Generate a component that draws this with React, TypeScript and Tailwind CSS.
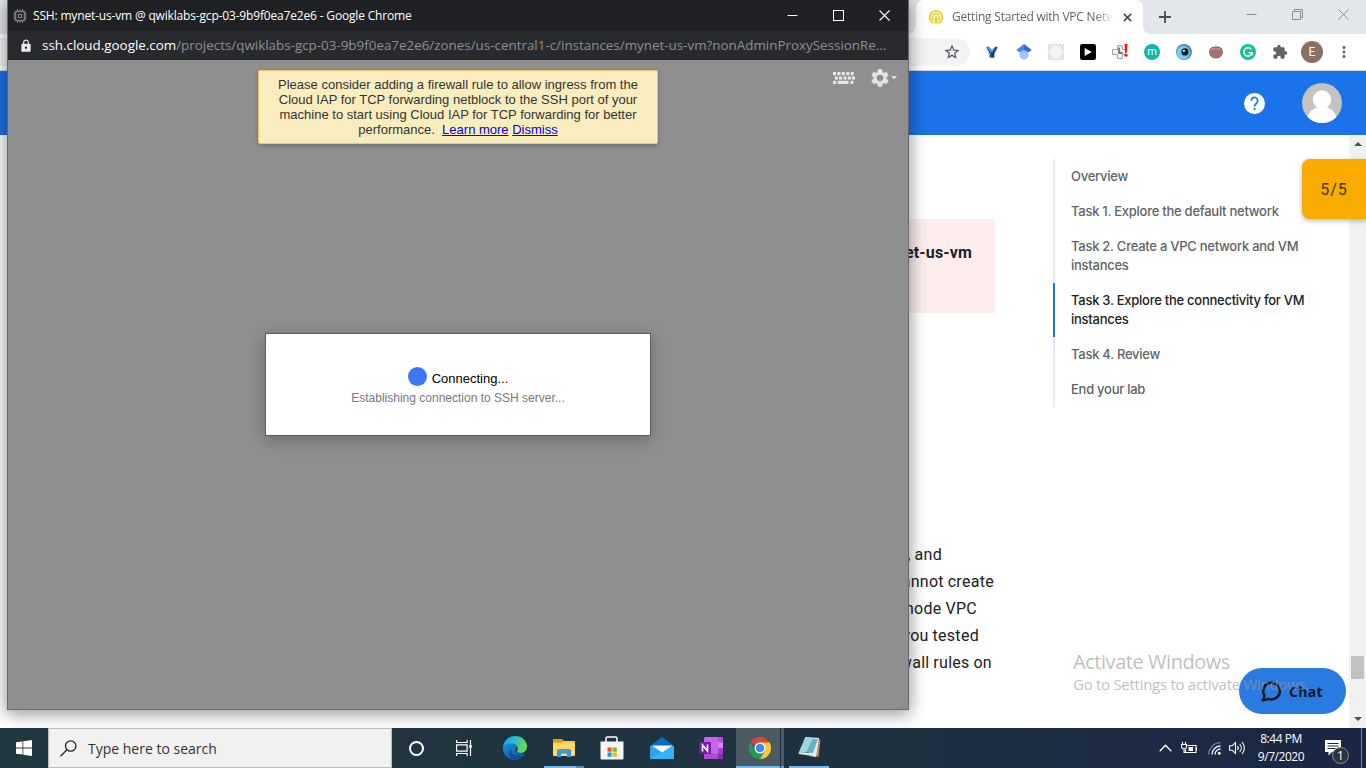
import React from "react";
import {
  MdExtension,
  MdLock,
  MdMoreVert,
  MdSettings,
  MdStarBorder,
} from "react-icons/md";

const ui = "font-['Open_Sans','Noto_Sans',sans-serif]";
const arial = "font-['Liberation_Sans',Arial,sans-serif]";
const roboto = "font-[Roboto,sans-serif]";

function ChipIcon() {
  return (
    <svg width="14" height="14" viewBox="0 0 14 14" fill="none" stroke="#7d7f82">
      <rect x="2.5" y="2.5" width="9" height="9" strokeWidth="1.6" />
      <rect x="5.5" y="5.5" width="3" height="3" strokeWidth="1.2" />
      <path d="M4.5 0v2M7 0v2M9.5 0v2M4.5 12v2M7 12v2M9.5 12v2M0 4.5h2M0 7h2M0 9.5h2M12 4.5h2M12 7h2M12 9.5h2" />
    </svg>
  );
}

function KeyboardIcon() {
  return (
    <svg width="22" height="12" viewBox="0 0 22 12" fill="#e6e6e6">
      {[0, 4.4, 8.8, 13.2, 17.6].map((x) => (
        <rect key={x} x={x} y="0" width="3.1" height="3.2" />
      ))}
      {[1.8, 6, 10.4, 14.8, 18.9].map((x) => (
        <rect key={x} x={x} y="4.4" width="3.1" height="3.2" />
      ))}
      <rect x="0" y="8.8" width="3.1" height="3.2" />
      <rect x="4.6" y="8.8" width="11" height="3.2" />
      <rect x="17.4" y="8.8" width="3.1" height="3.2" />
    </svg>
  );
}

function SshWindow() {
  return (
    <section className="absolute left-[7px] top-0 flex h-[710px] w-[902px] flex-col border-x border-b border-[#66686b] shadow-[0_3px_16px_1px_rgba(0,0,0,0.42)]">
      <header className="flex h-[31px] shrink-0 items-center bg-[#202124] pl-[5px] text-white">
        <ChipIcon />
        <span className={`${ui} ml-[6px] whitespace-nowrap text-[12px] tracking-[-0.17px]`}>
          SSH: mynet-us-vm @ qwiklabs-gcp-03-9b9f0ea7e2e6 - Google Chrome
        </span>
        <div className="ml-auto flex pr-[0.5px]">
          <div className="flex w-[46px] justify-center">
            <svg width="11" height="11" viewBox="0 0 11 11" stroke="#fff">
              <path d="M0.5 5.5h10" />
            </svg>
          </div>
          <div className="flex w-[46px] justify-center">
            <svg width="11" height="11" viewBox="0 0 11 11" stroke="#fff" fill="none">
              <rect x="0.5" y="0.5" width="10" height="10" />
            </svg>
          </div>
          <div className="flex w-[46px] justify-center">
            <svg width="11" height="11" viewBox="0 0 11 11" stroke="#fff" strokeWidth="1.1">
              <path d="M0.5 0.5l10 10M10.5 0.5l-10 10" />
            </svg>
          </div>
        </div>
      </header>
      <div className={`${ui} flex h-[29px] shrink-0 items-center bg-[#292a2d] pl-[11px] text-[13.4px]`}>
        <MdLock className="h-[14px] w-[14px] text-[#e8eaed]" />
        <span className="ml-[9px] whitespace-nowrap text-white">ssh.cloud.google.com</span>
        <span className="whitespace-nowrap text-[#8d8f93]">
          /projects/qwiklabs-gcp-03-9b9f0ea7e2e6/zones/us-central1-c/instances/mynet-us-vm?nonAdminProxySessionRe...
        </span>
      </div>
      <div className="relative flex flex-1 flex-col items-center bg-[#8f8f8f] pt-[10px]">
        <div className="absolute right-[11px] top-[7px] flex items-center">
          <KeyboardIcon />
          <MdSettings className="ml-[14px] h-[22px] w-[22px] text-[#e2e2e2]" />
          <svg width="6" height="4" viewBox="0 0 6 4" fill="#e2e2e2">
            <path d="M0 0h6L3 3.5z" />
          </svg>
        </div>
        <div className={`${arial} h-[74px] w-[400px] rounded-[2px] border border-[#f0c36d] bg-[#f9edbe] pt-[6px] text-center text-[13px] leading-[15px] text-[#333] shadow-[0_2px_4px_rgba(0,0,0,0.2)]`}>
          <p>Please consider adding a firewall rule to allow ingress from the</p>
          <p>Cloud IAP for TCP forwarding netblock to the SSH port of your</p>
          <p>machine to start using Cloud IAP for TCP forwarding for better</p>
          <p>
            performance.&nbsp; <a className="text-[#0000ee] underline">Learn more</a>{" "}
            <a className="text-[#0000ee] underline">Dismiss</a>
          </p>
        </div>
        <div className={`${arial} mt-[189px] flex h-[103px] w-[386px] flex-col items-center border border-[#5c5c5c] bg-white pt-[33px] shadow-[0_4px_16px_rgba(0,0,0,0.25)]`}>
          <div className="flex h-[20px] items-start">
            <div className="h-[19px] w-[19px] rounded-full bg-[#3b78f5]" />
            <span className="ml-[5px] mt-[4px] text-[13px] leading-[16px] text-black">Connecting...</span>
          </div>
          <span className="mt-[4px] text-[12px] leading-[14px] text-[#777]">
            Establishing connection to SSH server...
          </span>
        </div>
      </div>
    </section>
  );
}

function TabStrip() {
  return (
    <div className="flex h-[34px] shrink-0 bg-[#e3e6ea] pl-[908px]">
      <svg className="mt-[26px]" width="8" height="8" viewBox="0 0 8 8" fill="#fff">
        <path d="M8 0v8H0a8 8 0 0 0 8-8z" />
      </svg>
      <div className="flex w-[227px] items-center rounded-t-[8px] bg-white pl-[13px]">
        <svg width="14" height="14" viewBox="0 0 14 14" fill="none" stroke="#f4cc12" strokeLinecap="round">
          <path d="M4.2 12.7A6.2 6.2 0 1 1 9.8 12.7" strokeWidth="1.7" />
          <path d="M4.7 9.9A3.6 3.6 0 1 1 9.3 9.9" strokeWidth="1.5" />
          <path d="M7 7.5v5" strokeWidth="2.4" />
        </svg>
        <div className="ml-[9px] flex w-[162px] overflow-hidden mask-r-from-88%">
          <span className={`${ui} whitespace-nowrap text-[12px] tracking-[-0.22px] text-[#5f6368]`}>
            Getting Started with VPC Netw
          </span>
        </div>
        <svg className="ml-[9px]" width="9" height="9" viewBox="0 0 9 9" stroke="#4b4e52" strokeWidth="1.7">
          <path d="M0.8 0.8l7.4 7.4M8.2 0.8L0.8 8.2" />
        </svg>
      </div>
      <svg className="mt-[26px]" width="8" height="8" viewBox="0 0 8 8" fill="#fff">
        <path d="M0 0v8h8a8 8 0 0 1-8-8z" />
      </svg>
      <svg className="ml-[8px] mt-[11px]" width="12" height="12" viewBox="0 0 12 12" stroke="#4b4e52" strokeWidth="1.8">
        <path d="M6 0v12M0 6h12" />
      </svg>
      <div className="ml-auto flex pr-[17px] pt-[9px]">
        <svg width="11" height="11" viewBox="0 0 11 11" stroke="#8b8e92">
          <path d="M0.5 5.5h10" />
        </svg>
        <svg className="ml-[35px]" width="11" height="11" viewBox="0 0 11 11" stroke="#8b8e92" fill="none">
          <path d="M0.5 2.5h8v8h-8zM2.5 2.5v-2h8v8h-2" />
        </svg>
        <svg className="ml-[35px]" width="11" height="11" viewBox="0 0 11 11" stroke="#8b8e92">
          <path d="M0.5 0.5l10 10M10.5 0.5l-10 10" />
        </svg>
      </div>
    </div>
  );
}

function Slot({ children }: { children: React.ReactNode }) {
  return <div className="flex w-[32px] items-center justify-center">{children}</div>;
}

function Toolbar() {
  return (
    <div className="flex h-[37px] shrink-0 border-b border-[#d5d8dc] bg-white pr-[6px]">
      <div className="my-[4px] flex w-[970px] items-center justify-end rounded-r-full bg-[#f1f3f4] pr-[9px]">
        <MdStarBorder className="h-[18px] w-[18px] text-[#4f5357]" />
      </div>
      <div className="ml-auto flex items-stretch">
        <Slot>
          <svg width="14" height="14" viewBox="0 0 14 14">
            <path d="M0.5 1.500L3.500 0.700 7 4.200 10.500 0.700l3 .8-2.500 6.500L9.500 13.300h-5L3 8z" fill="#d4d7da" />
            <path d="M1.500 2h2.200L7 5.300 10.300 2h2.200L9.200 8.400V12.500H4.800V8.400z" fill="#174a8c" />
            <path d="M2.300 2.300h1.300L7 5.800 10.400 2.300l-2 5H5.600z" fill="#3fa9f5" />
            <path d="M8 6.500L12 2.300 8.700 8.300 8.500 12H7z" fill="#0b2a52" />
          </svg>
        </Slot>
        <Slot>
          <svg width="16" height="16" viewBox="0 0 16 16">
            <path d="M8 0L0.3 6 8 11.6z" fill="#4285f4" />
            <path d="M8 0l7.7 6L8 11.6z" fill="#3367d6" />
            <circle cx="8" cy="10.8" r="4.6" fill="#a0c3ff" />
            <path d="M4 8.5a4.6 4.6 0 0 1 8 0L8 6.6z" fill="#76a7fa" />
          </svg>
        </Slot>
        <Slot>
          <svg width="16" height="16" viewBox="0 0 16 16" fill="none" stroke="#fff">
            <rect width="16" height="16" fill="#e3e3e3" stroke="none" />
            <ellipse cx="8" cy="8" rx="6.5" ry="2.6" />
            <ellipse cx="8" cy="8" rx="6.5" ry="2.6" transform="rotate(60 8 8)" />
            <ellipse cx="8" cy="8" rx="6.5" ry="2.6" transform="rotate(120 8 8)" />
            <circle cx="8" cy="8" r="0.9" fill="#fff" />
          </svg>
        </Slot>
        <Slot>
          <svg width="16" height="16" viewBox="0 0 16 16">
            <rect width="16" height="16" rx="2.2" fill="#000" />
            <path d="M4.6 4l7.2 4-7.2 4z" fill="#fff" />
          </svg>
        </Slot>
        <Slot>
          <svg width="16" height="16" viewBox="0 0 16 16">
            <path d="M5.500 1.500h5v4h3v5h-3v4h-5v-4h-5v-5h5z" fill="#efefef" stroke="#a2a2a2" strokeWidth="1" />
            <path d="M7 3.500V9h3.500" stroke="#444" strokeWidth="1.300" fill="none" />
            <path d="M12.500 0h3l-.5 8.500h-2z" fill="#f01414" />
            <circle cx="14" cy="11.300" r="1.500" fill="#f01414" />
          </svg>
        </Slot>
        <Slot>
          <div className={`${roboto} flex h-4 w-4 items-center justify-center rounded-full bg-[#10b5ad] pb-[1px] text-[11px] leading-none text-white`}>m</div>
        </Slot>
        <Slot>
          <svg width="16" height="16" viewBox="0 0 16 16">
            <circle cx="8" cy="8" r="8" fill="#4c8fb0" />
            <circle cx="7.400" cy="8.600" r="6.600" fill="#74cdf2" />
            <circle cx="9" cy="7.900" r="3.600" fill="#151e2b" />
            <circle cx="7.900" cy="6.800" r="1.100" fill="#fff" />
          </svg>
        </Slot>
        <Slot>
          <svg width="16" height="16" viewBox="0 0 16 16">
            <path d="M8 3.500C12 1.500 15 4.500 15 8s-2.500 6.500-7 6.500S1 11.500 1 8s3-6.500 7-4.500z" fill="#a3706f" />
            <path d="M3 6c2-2 7-2 9 0" stroke="#cfadac" strokeWidth="1.200" fill="none" />
            <path d="M5.500 3.500L8 4l2.500-1.200M8 4V1.500" stroke="#6f6a5c" strokeWidth="1" fill="none" />
          </svg>
        </Slot>
        <Slot>
          <svg width="16" height="16" viewBox="0 0 16 16" fill="none" stroke="#fff" strokeWidth="1.500">
            <circle cx="8" cy="8" r="8" fill="#15c39a" stroke="none" />
            <path d="M11.300 5.200A4.200 4.200 0 1 0 12.200 8.700H8.600M12.200 8.200v3" />
          </svg>
        </Slot>
        <Slot><MdExtension className="h-[16px] w-[16px] text-[#5f6368]" /></Slot>
        <Slot>
          <div className={`${roboto} flex h-[22px] w-[22px] items-center justify-center rounded-full bg-[#8d6e63] text-[12px] leading-none text-white`}>E</div>
        </Slot>
        <Slot><MdMoreVert className="h-[18px] w-[18px] text-[#5f6368]" /></Slot>
      </div>
    </div>
  );
}

function LabHeader() {
  return (
    <div className="flex h-[64px] shrink-0 items-center justify-end bg-[#1a73e8] pr-[24px]">
      <svg className="mr-[37px]" width="21" height="21" viewBox="0 0 21 21" fill="none">
        <circle cx="10.500" cy="10.500" r="10.500" fill="#fff" />
        <path d="M7.300 7.800a3.200 3.200 0 1 1 5.300 2.300c-1.300 1.100-2.100 1.700-2.100 3.400" stroke="#1a73e8" strokeWidth="1.700" />
        <rect x="9.600" y="15" width="1.900" height="1.900" fill="#1a73e8" />
      </svg>
      <svg width="40" height="40" viewBox="0 0 40 40">
        <clipPath id="face"><circle cx="20" cy="20" r="20" /></clipPath>
        <g clipPath="url(#face)">
          <rect width="40" height="40" fill="#c3c3c3" />
          <circle cx="20" cy="16.500" r="9.200" fill="#fff" />
          <ellipse cx="20" cy="36.500" rx="14.500" ry="13" fill="#fff" />
        </g>
      </svg>
    </div>
  );
}

const toc = [
  { lines: ["Overview"] },
  { lines: ["Task 1. Explore the default network"] },
  { lines: ["Task 2. Create a VPC network and VM", "instances"] },
  { lines: ["Task 3. Explore the connectivity for VM", "instances"], active: true },
  { lines: ["Task 4. Review"] },
  { lines: ["End your lab"] },
];

function LabContent() {
  return (
    <div className="relative flex min-h-0 flex-1 bg-white">
      <div className={`${roboto} flex w-[995px] flex-col items-end text-right text-[16px] text-[#202124]`}>
        <div className="mt-[84px] h-[94px] w-[900px] rounded-[2px] bg-[#fdeded] pr-[23px] pt-[20px] font-bold leading-[27px] tracking-[0.15px]">
          mynet-us-vm
        </div>
        <div className="mt-[228px] leading-[27px] tracking-[0.3px] [word-spacing:-0.5px]">
          <p className="pr-[53px]">, and</p>
          <p className="pr-[1px]">cannot create</p>
          <p className="pr-[18px]">mode VPC</p>
          <p className="pr-[16px]">you tested</p>
          <p className="pr-[3px]">firewall rules on</p>
        </div>
      </div>
      <nav className="ml-[58px] mt-[24px] flex h-[248px] flex-col font-[Inter,sans-serif] text-[13px] font-medium leading-[19px] tracking-[-0.26px] text-[#5f6368]">
        {toc.map((t) => (
          <div
            key={t.lines[0]}
            className={t.active ? "border-l-2 border-[#1a73e8] py-[8px] pl-[16px] text-[#202124]" : "border-l-2 border-[#e8eaed] py-[8px] pl-[16px]"}
          >
            {t.lines.map((l) => (
              <p key={l} className="whitespace-nowrap">{l}</p>
            ))}
          </div>
        ))}
      </nav>
      <div className="ml-auto flex w-[17px] flex-col items-center bg-[#f1f1f1]">
        <svg className="mt-[7px]" width="8" height="4" viewBox="0 0 8 4" fill="#505050"><path d="M0 4h8L4 0z" /></svg>
        <div className="mt-[510px] h-[23px] w-[13px] bg-[#c1c1c1]" />
        <svg className="mt-[38px]" width="8" height="4" viewBox="0 0 8 4" fill="#505050"><path d="M0 0h8L4 4z" /></svg>
      </div>
      <div className={`${roboto} absolute right-0 top-[24px] flex h-[60px] w-[64px] items-center justify-center rounded-l-[8px] bg-[#f9ab00] pt-[2px] text-[16px] text-[#3c3a33] shadow-[0_2px_5px_rgba(60,64,67,0.35)]`}>
        <span className="tracking-[1px]">5/5</span>
      </div>
      <div className="absolute bottom-[14px] right-[20px] flex h-[46px] w-[107px] items-center rounded-full bg-[#297be2] pl-[21px] text-[#10151f]">
        <svg width="22" height="22" viewBox="0 0 22 22" fill="none" stroke="#10151f" strokeWidth="2.400" strokeLinejoin="round">
          <path d="M4.500 15.500A8.300 8.300 0 1 1 8.500 18.800C6.500 19.800 4.500 20.200 2.500 20.200 4 19 4.600 17.500 4.500 15.500z" />
        </svg>
        <span className={`${ui} ml-[7px] text-[14px] font-bold tracking-[0.3px]`}>Chat</span>
      </div>
      <div className="pointer-events-none absolute left-[1073px] top-[513px] font-['Open_Sans','Noto_Sans',sans-serif] text-[#9a9a9a]/65">
        <p className="text-[20px] leading-[27px] tracking-[-0.45px]">Activate Windows</p>
        <p className="whitespace-nowrap text-[15px] leading-[18px] tracking-[-0.28px]">Go to Settings to activate Windows.</p>
      </div>
    </div>
  );
}

function Taskbar() {
  return (
    <footer className={`${ui} relative z-10 flex h-[40px] shrink-0 bg-linear-to-r from-[#20383f] via-[#1f3140] via-60% to-[#1a2644]`}>
      <div className="flex w-[48px] items-center justify-center">
        <svg width="16" height="16" viewBox="0 0 16 16" fill="#fff">
          <path d="M0 2.300L6.500 1.400v6.200H0zM7.300 1.300L16 0v7.600H7.300zM0 8.400h6.500v6.200L0 13.700zM7.300 8.400H16V16l-8.700-1.200z" />
        </svg>
      </div>
      <div className="flex w-[344px] items-center border border-[#bcbcbc] bg-[#f1f1f1] pl-[11px]">
        <svg width="17" height="17" viewBox="0 0 17 17" fill="none" stroke="#222" strokeWidth="1.300">
          <circle cx="10.700" cy="6" r="5.200" />
          <path d="M7 9.800L0.500 16.300" />
        </svg>
        <span className="ml-[11px] text-[14px] text-[#333]">Type here to search</span>
      </div>
      <div className="flex w-[48px] items-center justify-center">
        <div className="h-[15px] w-[15px] rounded-full border-[2px] border-white" />
      </div>
      <div className="flex w-[48px] items-center justify-center">
        <svg width="16" height="16" viewBox="0 0 16 16" fill="none" stroke="#fff" strokeWidth="1.200">
          <path d="M0.600 0v2.500h10.500V0M0.600 16v-2.500h10.500V16M0.600 4.800h10.500v6.400H0.600z M14.500 0v16" />
          <rect x="13.200" y="5" width="2.600" height="2.600" fill="#fff" stroke="none" />
        </svg>
      </div>
      <div className="flex w-[54px] items-center justify-center">
        <svg width="24" height="24" viewBox="0 0 24 24">
          <defs>
            <linearGradient id="e1" x1="0" y1="0" x2="1" y2="0.300"><stop offset="0" stopColor="#1f9be0" /><stop offset="0.550" stopColor="#30c0cc" /><stop offset="1" stopColor="#62dc4f" /></linearGradient>
            <linearGradient id="e2" x1="0" y1="0" x2="0.600" y2="1"><stop offset="0" stopColor="#1b93dd" /><stop offset="1" stopColor="#0c59a4" /></linearGradient>
          </defs>
          <path d="M0 12C0 7 4 5.500 8 6.500c4 1 6 4 5 6.500-1.500 4 4 6 9 4C20 21.500 16.500 24 12 24 5 24 0 19 0 12z" fill="url(#e2)" />
          <path d="M8.500 12.500C7 18 12 22 22 17.500 20 21.500 16 24 12 24 6 22.500 4.500 16 8.500 12.500z" fill="#0f4f9e" />
          <path d="M0 11C1 4 6 0 12 0c7 0 12 5 12 10.500 0 4-3 6.500-6.500 6.500-3 0-4-1.200-3.300-2.300C16 12 13.500 7.500 8 7.500c-4 0-7 1.500-8 3.500z" fill="url(#e1)" />
        </svg>
      </div>
      <div className="ml-[2px] flex w-[32px] flex-col items-center border-b-2 border-[#76b9ed] pl-[8px] pt-[11px]">
        <svg width="22" height="18" viewBox="0 0 22 18">
          <path d="M0 0h9l1.500 2H22v14H0z" fill="#f9c949" />
          <path d="M0 0h9l1.500 2L9 3.500H0z" fill="#e39b17" />
          <path d="M0 4h22v13H0z" fill="#ffd767" />
          <path d="M4 18v-6.500a1.500 1.500 0 0 1 1.500-1.500h11a1.500 1.500 0 0 1 1.500 1.500V18h-4.200v-3.500H8.200V18z" fill="#3f97dc" />
        </svg>
      </div>
      <div className="w-[8px] border-b-2 border-[#5689b0]" />
      <div className="ml-[4px] flex w-[48px] items-center justify-center">
        <svg width="24" height="24" viewBox="0 0 24 24">
          <path d="M6 7V2.500A1.500 1.500 0 0 1 7.500 1h8A1.500 1.500 0 0 1 17 2.500V7" fill="none" stroke="#fff" strokeWidth="1.500" />
          <path d="M0.500 5.500h23V22.500a1 1 0 0 1-1 1h-21a1 1 0 0 1-1-1z" fill="#f4f4f4" />
          <path d="M7.500 11.500h4.200v4.200H7.500z" fill="#f04e1f" /><path d="M12.600 11.500h4.200v4.200h-4.200z" fill="#7db900" />
          <path d="M7.500 16.500h4.200v4.200H7.500z" fill="#03a3ec" /><path d="M12.600 16.500h4.200v4.200h-4.200z" fill="#fdb600" />
        </svg>
      </div>
      <div className="flex w-[50px] items-center justify-center pl-px">
        <svg width="24" height="22" viewBox="0 0 24 22">
          <path d="M0 9L12 0l12 9v3H0z" fill="#0f6cbd" />
          <path d="M0 9v13h24V9z" fill="#34b4f0" />
          <path d="M2 8.500h20.500L12 15.500z" fill="#f5f5f5" />
          <path d="M0 9l12 6.500L0 22z" fill="#2aa3ea" />
        </svg>
      </div>
      <div className="flex w-[50px] items-center justify-center pr-px">
        <svg width="24" height="22" viewBox="0 0 24 22">
          <rect x="5" width="19" height="22" rx="1.500" fill="#c964e8" />
          <path d="M19 0h5v5.500h-5z" fill="#b14fd8" /><path d="M19 5.500h5V11h-5z" fill="#d682f2" /><path d="M19 11h5v5.500h-5z" fill="#a53fce" /><path d="M5 16.500h14V22H5z" fill="#ae4bd5" /><path d="M19 16.500h5V22h-5z" fill="#8d2db6" />
          <rect y="5" width="12" height="12" rx="1" fill="#7719aa" />
          <path d="M3.500 14.500V8l5 6V7.500" fill="none" stroke="#fff" strokeWidth="1.600" />
        </svg>
      </div>
      <div className="flex w-[44px] items-center justify-center border-b-2 border-[#76b9ed] bg-[#4b5a63] pl-[4px] pt-[1px]">
        <svg width="22" height="22" viewBox="0 0 22 22">
          <path d="M11 11L1.470 5.500A11 11 0 0 1 20.530 5.500z" fill="#db4437" />
          <path d="M11 5.500h9.530A11 11 0 0 1 11 22L15.800 13.700z" fill="#fcc934" />
          <path d="M6.240 13.750L1.470 5.500A11 11 0 0 0 11 22l4.760-8.250z" fill="#1e9d55" />
          <circle cx="11" cy="11" r="5.500" fill="#fff" />
          <circle cx="11" cy="11" r="4.300" fill="#4285f4" />
        </svg>
      </div>
      <div className="ml-[1px] w-[3px] border-b-2 border-[#689fc9] bg-[#4b5a63]" />
      <div className="ml-[5px] flex w-[40px] items-center justify-center border-b-2 border-[#76b9ed]">
        <svg width="23" height="22" viewBox="0 0 23 22">
          <path d="M20 3l2.500 1-2 17-4-1z" fill="#b98b56" />
          <path d="M7 1l14 1-3 19-6-1z" fill="#e9eff1" />
          <path d="M7 2l13 1-5 14L1 16z" fill="#63b3c0" />
          <path d="M7 2l8 .600L8 16.600 1 16z" fill="#9fd6dc" />
          <path d="M1 16l14 1.500-.500 2.500L0.500 18z" fill="#d8e6ea" />
        </svg>
      </div>
      <div className="ml-auto flex items-center text-white">
        <svg width="13" height="8" viewBox="0 0 13 8" fill="none" stroke="#fff" strokeWidth="1.300"><path d="M0.700 7.200L6.500 1.200l5.800 6" /></svg>
        <svg className="ml-[9px]" width="17" height="13" viewBox="0 0 17 13" fill="none" stroke="#fff" strokeWidth="1.100">
          <path d="M6.500 3.500h8.500v7H4.500V7.500M15.500 5.500v3" />
          <rect x="7.500" y="5" width="4.500" height="4" fill="#fff" stroke="none" />
          <path d="M1.500 0v2.500M4.500 0v2.500M0.500 2.500h5v2a2.500 2.500 0 0 1-5 0zM3 7v3.500h1.500" />
        </svg>
        <svg className="ml-[10px]" width="13" height="13" viewBox="0 0 13 13" fill="none" stroke="#fff" strokeWidth="1.300">
          <path d="M0.700 12.500A12 12 0 0 1 12.500 0.700" opacity="0.400" />
          <path d="M4 12.500A8.500 8.500 0 0 1 12.500 4M7 12.500A5.500 5.500 0 0 1 12.500 7" />
          <circle cx="11.300" cy="11.300" r="1.500" fill="#fff" stroke="none" />
        </svg>
        <svg className="ml-[8px]" width="17" height="14" viewBox="0 0 17 14" fill="none" stroke="#fff" strokeWidth="1.100">
          <path d="M0.600 4.800h2.600L6.500 1.500v11L3.200 9.200H0.600z" />
          <path d="M8.500 5a3 3 0 0 1 0 4M10.700 3a6 6 0 0 1 0 8M13 1a9 9 0 0 1 0 12" />
        </svg>
        <div className="ml-[7px] w-[56px] text-center text-[12px] leading-[18px] tracking-[-0.45px]">
          <p>8:44 PM</p>
          <p>9/7/2020</p>
        </div>
        <div className="relative ml-[16px] h-[40px] w-[36px]">
          <svg className="absolute left-0 top-[12px]" width="26" height="26" viewBox="0 0 26 26">
            <path d="M0 0h16v12H7l-3.500 3.500V12H0z" fill="#fff" />
            <path d="M2.500 3.500h11M2.500 6h11M2.500 8.500h8" stroke="#1a2644" />
            <circle cx="15.500" cy="15.500" r="8" fill="#2f3338" stroke="#8b8f94" />
          </svg>
          <span className="absolute left-[12px] top-[20px] text-[12px] leading-[15px]">1</span>
        </div>
        <div className="h-full w-[5px] border-l border-[#7b8494]" />
      </div>
    </footer>
  );
}

export default function App() {
  return (
    <main className="relative flex h-[768px] w-[1366px] flex-col overflow-hidden bg-white">
      <TabStrip />
      <Toolbar />
      <LabHeader />
      <LabContent />
      <Taskbar />
      <SshWindow />
    </main>
  );
}
